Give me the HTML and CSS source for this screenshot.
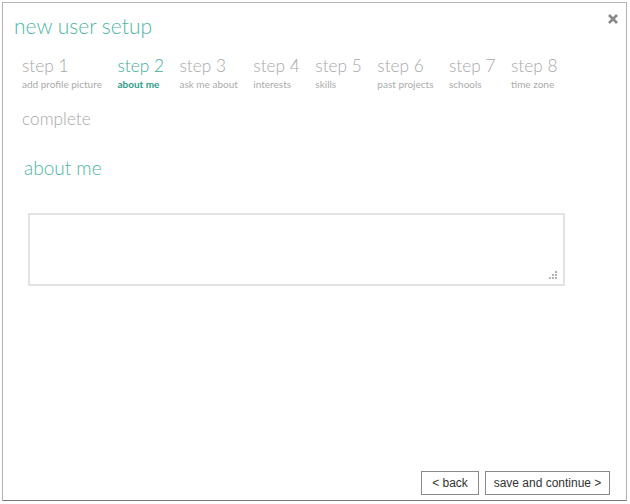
FILE: index.html
```
<!DOCTYPE html>
<html lang="en">

<head>
    <meta charset="UTF-8">
    <title>new user setup</title>
    <link rel="stylesheet" href="styles.css">
</head>

<body>
    <div class="dialog">
        <svg class="close" width="12" height="12" viewBox="0 0 12 12">
            <path d="M2 2 L10 10 M10 2 L2 10" stroke="#8a8a8a" stroke-width="2.6" />
        </svg>
        <h1 class="title">new user setup</h1>

        <ul class="steps">
            <li><span class="num">step 1</span><span class="sub">add profile picture</span></li>
            <li class="active"><span class="num">step 2</span><span class="sub">about me</span></li>
            <li><span class="num">step 3</span><span class="sub">ask me about</span></li>
            <li><span class="num">step 4</span><span class="sub">interests</span></li>
            <li><span class="num">step 5</span><span class="sub">skills</span></li>
            <li><span class="num">step 6</span><span class="sub">past projects</span></li>
            <li><span class="num">step 7</span><span class="sub">schools</span></li>
            <li><span class="num">step 8</span><span class="sub">time zone</span></li>
            <li><span class="num">complete</span></li>
        </ul>

        <h2 class="section">about me</h2>

        <div class="field">
            <textarea class="about"></textarea>
            <!-- resize grip dots -->
            <svg class="grip" width="8" height="8" viewBox="0 0 8 8">
                <rect x="6" y="0" width="2" height="2" fill="#b4b4b4" />
                <rect x="3" y="3" width="2" height="2" fill="#b4b4b4" />
                <rect x="6" y="3" width="2" height="2" fill="#b4b4b4" />
                <rect x="0" y="6" width="2" height="2" fill="#b4b4b4" />
                <rect x="3" y="6" width="2" height="2" fill="#b4b4b4" />
                <rect x="6" y="6" width="2" height="2" fill="#b4b4b4" />
            </svg>
        </div>

        <div class="actions">
            <button class="btn back">&lt; back</button>
            <button class="btn save">save and continue &gt;</button>
        </div>
    </div>
</body>

</html>
```

FILE: styles.css
```
* {
    margin: 0;
    padding: 0;
    list-style: none;
    box-sizing: border-box;
}

body {
    font-family: Lato, "Open Sans", "Liberation Sans", sans-serif;
    background: #fff;
}

.dialog {
    position: relative;
    margin: 2px 0 0 2px;
    width: 625px;
    height: 499px;
    border: 1px solid #b4b4b4;
    border-bottom-color: #7a7a7a;
    display: flex;
    flex-direction: column;
    padding: 8px 0 0 11px;
}

.close {
    position: absolute;
    top: 10px;
    right: 7px;
}

.title {
    font-size: 21px;
    font-weight: 300;
    color: #4db6a4;
    line-height: 30px;
}

.steps {
    display: flex;
    flex-wrap: wrap;
    width: 600px;
    margin: 13px 0 0 8px;
    row-gap: 7px;
}

.steps li {
    display: flex;
    flex-direction: column;
    margin-right: 15.5px;
    height: 46px;
}

.num {
    font-size: 17.3px;
    font-weight: 300;
    color: #a8a8a8;
    line-height: 24px;
}

.sub {
    font-size: 10px;
    color: #ababab;
    line-height: 12px;
}

.steps .active .num {
    color: #3fae9c;
}

.steps .active .sub {
    color: #2e9c8a;
    font-weight: bold;
}

.section {
    margin: 3px 0 0 10px;
    font-size: 19px;
    font-weight: 300;
    color: #4db6a4;
    line-height: 24px;
}

.field {
    position: relative;
    width: 551px;
    margin: 33px 0 0 14px;
}

.about {
    display: block;
    width: 537px;
    height: 73px;
    border: 2px solid #e3e3e3;
    outline: none;
    resize: none;
}

.grip {
    position: absolute;
    left: 521px;
    top: 58px;
}

.actions {
    margin-top: auto;
    display: flex;
    justify-content: flex-end;
    gap: 6px;
    padding: 0 16px 5px 0;
}

.btn {
    font-family: "Liberation Sans", Arial, sans-serif;
    font-size: 12px;
    color: #333;
    background: #fff;
    border: 1px solid #8a8a8a;
    height: 24px;
}

.back {
    width: 58px;
}

.save {
    width: 125px;
}
```
